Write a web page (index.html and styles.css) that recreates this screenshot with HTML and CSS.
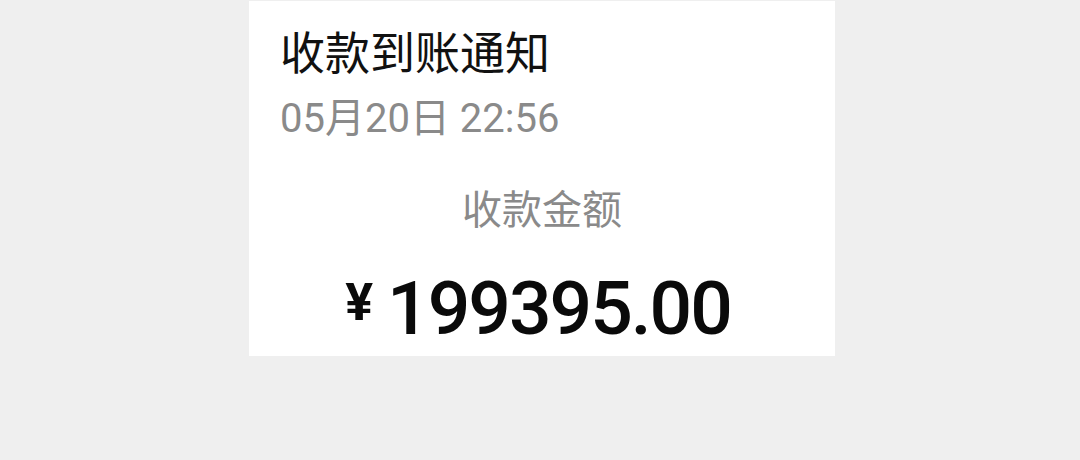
FILE: index.html
```html
<!DOCTYPE html>
<html lang="zh-CN">

<head>
    <meta charset="UTF-8">
    <meta name="viewport" content="width=device-width, initial-scale=1.0">
    <title>收款到账通知</title>
    <link rel="stylesheet" href="styles.css">
</head>

<body>
    <div class="notice-card">
        <h1 class="notice-title">收款到账通知</h1>
        <p class="notice-time">05月20日 22:56</p>
        <div class="amount-box">
            <p class="amount-label">收款金额</p>
            <p class="amount-value"><span class="currency">¥</span>199395.00</p>
        </div>
    </div>
</body>

</html>
```

FILE: styles.css
```css
html,
body {
    margin: 0;
    padding: 0;
}

body {
    font-family: Roboto, "Noto Sans CJK SC", sans-serif;
    background-color: #efefef;
    min-height: 460px;
    padding-top: 1px;
    box-sizing: border-box;
}

.notice-card {
    width: 586px;
    margin-left: 249px;
    background-color: #ffffff;
    padding: 26px 0 8px 31px;
    box-sizing: border-box;
    display: flex;
    flex-direction: column;
}

.notice-title {
    margin: 0;
    font-size: 45px;
    line-height: 56px;
    font-weight: 400;
    color: #111111;
}

.notice-time {
    margin: 12px 0 0;
    font-size: 40px;
    line-height: 48px;
    color: #8a8a8a;
}

/* amount block is centered inside the card */
.amount-box {
    display: flex;
    flex-direction: column;
    align-items: center;
    margin-left: -31px;
}

.amount-label {
    margin: 44px 0 0;
    font-size: 40px;
    line-height: 48px;
    color: #8a8a8a;
}

.amount-value {
    margin: 33px 8px 0 0;
    font-size: 75px;
    line-height: 80px;
    font-weight: 500;
    letter-spacing: -2px;
    color: #0a0a0a;
    display: flex;
    align-items: flex-start;
}

.currency {
    font-size: 52px;
    line-height: 52px;
    font-weight: 700;
    letter-spacing: 0;
    margin: 9px 14px 0 0;
}
```
